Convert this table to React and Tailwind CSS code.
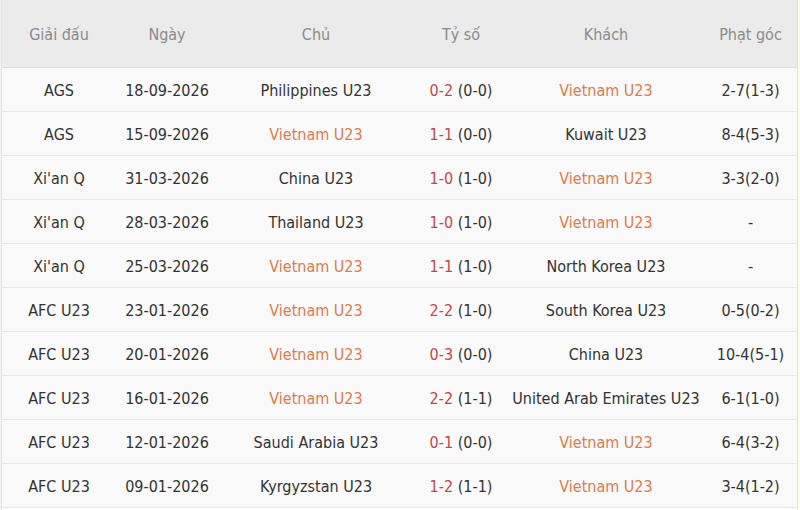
import React from "react";

const rows = [
  ["AGS", "18-09-2026", "Philippines U23", "0-2", "(0-0)", "Vietnam U23", "2-7(1-3)", 2],
  ["AGS", "15-09-2026", "Vietnam U23", "1-1", "(0-0)", "Kuwait U23", "8-4(5-3)", 1],
  ["Xi'an Q", "31-03-2026", "China U23", "1-0", "(1-0)", "Vietnam U23", "3-3(2-0)", 2],
  ["Xi'an Q", "28-03-2026", "Thailand U23", "1-0", "(1-0)", "Vietnam U23", "-", 2],
  ["Xi'an Q", "25-03-2026", "Vietnam U23", "1-1", "(1-0)", "North Korea U23", "-", 1],
  ["AFC U23", "23-01-2026", "Vietnam U23", "2-2", "(1-0)", "South Korea U23", "0-5(0-2)", 1],
  ["AFC U23", "20-01-2026", "Vietnam U23", "0-3", "(0-0)", "China U23", "10-4(5-1)", 1],
  ["AFC U23", "16-01-2026", "Vietnam U23", "2-2", "(1-1)", "United Arab Emirates U23", "6-1(1-0)", 1],
  ["AFC U23", "12-01-2026", "Saudi Arabia U23", "0-1", "(0-0)", "Vietnam U23", "6-4(3-2)", 2],
  ["AFC U23", "09-01-2026", "Kyrgyzstan U23", "1-2", "(1-1)", "Vietnam U23", "3-4(1-2)", 2],
];

const grid = "grid grid-cols-[114px_102px_196px_94px_196px_93px]";

export default function App() {
  return (
    <div
      className="w-[800px] h-[510px] bg-white flex overflow-hidden text-[#333] text-[16px]"
      style={{ fontFamily: '"DejaVu Sans Condensed", "DejaVu Sans", sans-serif' }}
    >
      <div className="w-[2px] bg-[#f3f3f3] border-r border-[#e2e2e2]" />
      <div className="w-[795px] flex flex-col">
        <div className={`${grid} h-[68px] pt-[2px] bg-[#ebebeb] text-[#8a8a8a] items-center border-b border-[#dcdcdc]`}>
          <div className="text-center">Giải đấu</div>
          <div className="text-center">Ngày</div>
          <div className="text-center">Chủ</div>
          <div className="text-center">Tỷ số</div>
          <div className="text-center">Khách</div>
          <div className="text-center">Phạt góc</div>
        </div>
        {rows.map((r, i) => (
          <div
            key={i}
            className={`${grid} h-[44px] pt-[2px] bg-[#f9f9f9] items-center border-b border-[#e6e6e6]`}
          >
            <div className="text-center">{r[0]}</div>
            <div className="text-center">{r[1]}</div>
            <div className={`text-center ${r[7] === 1 ? "text-[#e07b4c]" : ""}`}>{r[2]}</div>
            <div className="text-center whitespace-nowrap">
              <span className="text-[#c4474d]">{r[3]}</span> {r[4]}
            </div>
            <div className={`text-center whitespace-nowrap ${r[7] === 2 ? "text-[#e07b4c]" : ""}`}>{r[5]}</div>
            <div className="text-center">{r[6]}</div>
          </div>
        ))}
      </div>
      <div className="w-px bg-[#e2e2e2]" />
      <div className="flex-1 bg-[#fdfbe9]" />
    </div>
  );
}
